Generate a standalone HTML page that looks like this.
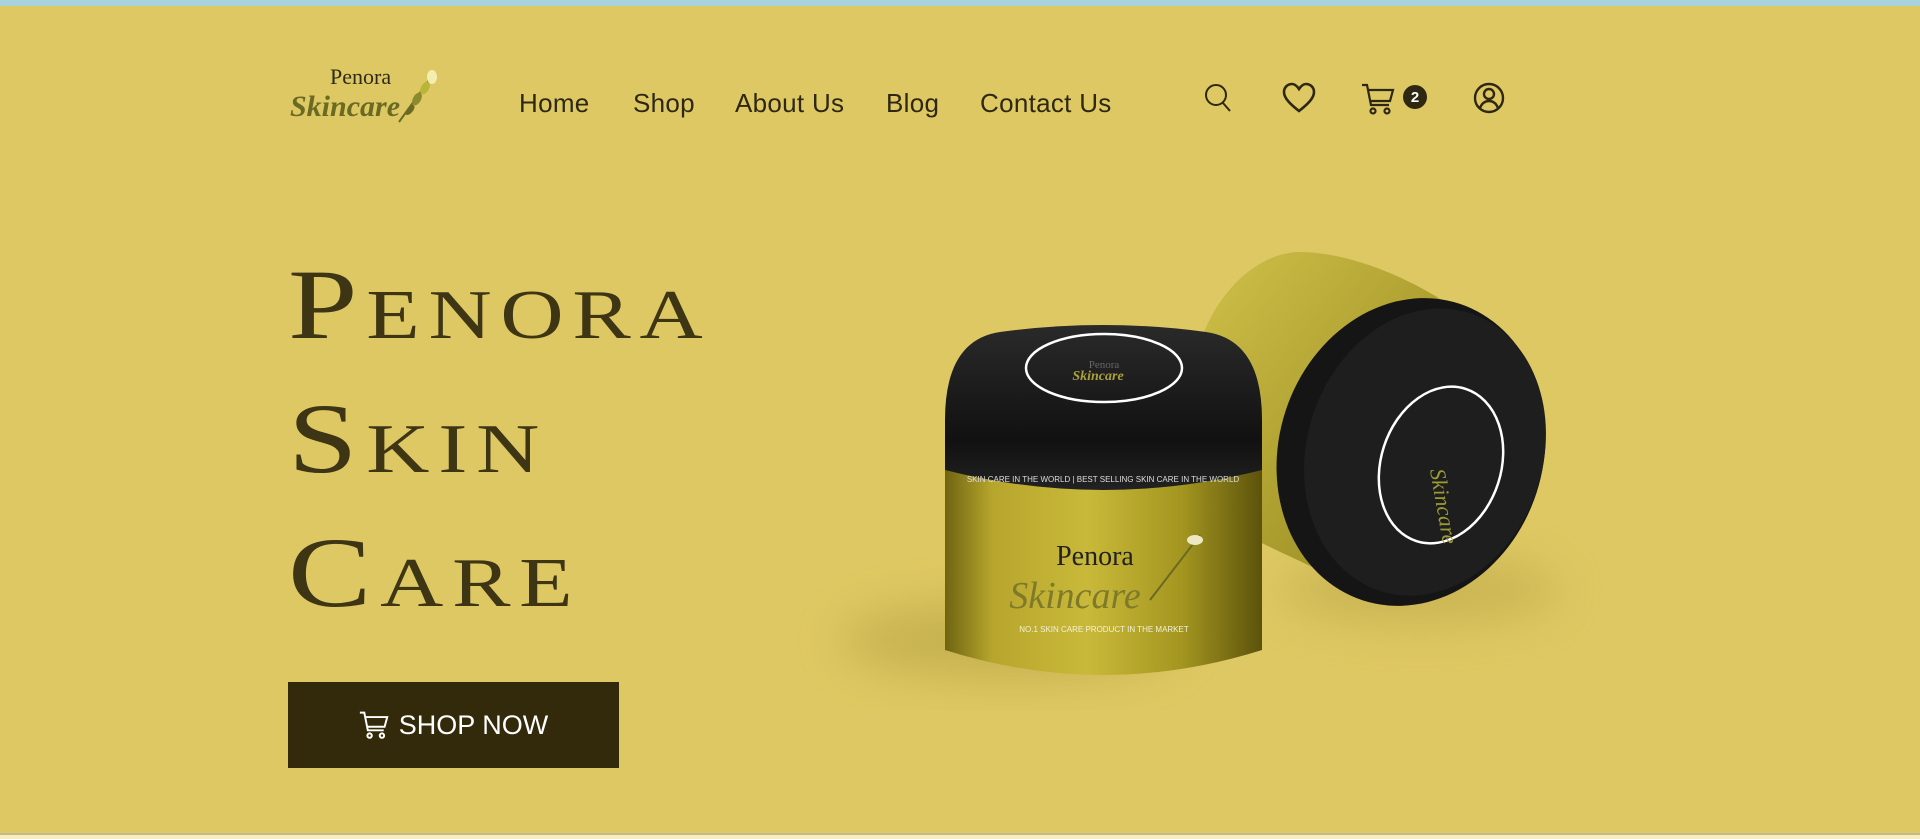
<!DOCTYPE html>
<html><head><meta charset="utf-8"><style>
*{margin:0;padding:0;box-sizing:border-box}
html,body{width:1920px;height:839px;overflow:hidden}
body{background:#f6eebf;font-family:"Liberation Sans",sans-serif;position:relative}
.top{position:absolute;left:0;top:0;width:1920px;height:6px;background:#a9d3dc}
.hero{position:absolute;left:0;top:6px;width:1920px;height:827px;background:#dec863}
.line{position:absolute;left:0;top:833px;width:1920px;height:2px;background:#c2b892}
.nav a{position:absolute;top:88px;font-size:26px;color:#2e2812;text-decoration:none;letter-spacing:0.3px}
h1{position:absolute;left:288px;top:238px;font-family:"Liberation Serif",serif;font-weight:normal;color:#3d3514;font-size:100px;line-height:134px;font-variant:small-caps;letter-spacing:7px;transform:scaleX(1.25);transform-origin:left top}
.btn{position:absolute;left:288px;top:682px;width:331px;height:86px;background:#332a0c;color:#fff;font-size:27px;display:flex;align-items:center;justify-content:center;gap:10px}
.logo1{position:absolute;left:330px;top:64px;font-family:"Liberation Serif",serif;font-size:22px;color:#2e2a1a}
.logo2{position:absolute;left:290px;top:90px;font-family:"Liberation Serif",serif;font-style:italic;font-weight:bold;font-size:30px;color:#6a6a22}
</style></head><body>
<div class="top"></div>
<div class="hero"></div>
<div class="line"></div>
<div class="logo1">Penora</div>
<div class="logo2">Skincare</div>
<svg style="position:absolute;left:395px;top:66px" width="50" height="60" viewBox="0 0 50 60">
<path d="M4 56 L40 6" stroke="#6a6a22" stroke-width="2" fill="none"/>
<ellipse cx="30" cy="22" rx="4" ry="7" fill="#b9b43a" transform="rotate(30 30 22)"/>
<ellipse cx="22" cy="33" rx="4" ry="7" fill="#8d8a2e" transform="rotate(30 22 33)"/>
<ellipse cx="37" cy="11" rx="5" ry="7" fill="#f3eeb0"/>
<ellipse cx="15" cy="44" rx="3" ry="6" fill="#6a6a22" transform="rotate(40 15 44)"/>
</svg>
<div class="nav">
<a style="left:519px">Home</a><a style="left:633px">Shop</a><a style="left:735px">About Us</a><a style="left:886px">Blog</a><a style="left:980px">Contact Us</a>
</div>
<svg style="position:absolute;left:1203px;top:82px" width="30" height="32" viewBox="0 0 30 32" fill="none" stroke="#2e2812" stroke-width="2"><circle cx="13" cy="13" r="10"/><path d="M20 21l7 8"/></svg>
<svg style="position:absolute;left:1282px;top:82px" width="34" height="32" viewBox="0 0 34 32" fill="none" stroke="#2e2812" stroke-width="2.6"><path d="M17 29C8 22 2 16 2 10 2 5 6 2 10 2c3 0 5 2 7 5 2-3 4-5 7-5 4 0 8 3 8 8 0 6-6 12-15 19z"/></svg>
<svg style="position:absolute;left:1361px;top:82px" width="34" height="34" viewBox="0 0 34 34" fill="none" stroke="#2e2812" stroke-width="2.2"><path d="M1 3h5l4 20h18M7 8h25l-3 11H10"/><circle cx="12" cy="29" r="2.5"/><circle cx="26" cy="29" r="2.5"/></svg>
<div style="position:absolute;left:1403px;top:85px;width:24px;height:24px;border-radius:50%;background:#2e2812;color:#fff;font-size:15px;font-weight:bold;display:flex;align-items:center;justify-content:center">2</div>
<svg style="position:absolute;left:1473px;top:82px" width="32" height="32" viewBox="0 0 32 32" fill="none" stroke="#2e2812" stroke-width="2.4"><circle cx="16" cy="16" r="14"/><circle cx="16" cy="12" r="5"/><path d="M7 26c2-5 5-7 9-7s7 2 9 7"/></svg>
<h1>Penora<br>Skin<br>Care</h1>
<svg style="position:absolute;left:740px;top:240px" width="880" height="470" viewBox="740 240 880 470">
<defs>
<linearGradient id="g" x1="0" x2="1"><stop offset="0" stop-color="#6f6412"/><stop offset=".15" stop-color="#b7a62c"/><stop offset=".45" stop-color="#c9b93a"/><stop offset=".75" stop-color="#a3951f"/><stop offset="1" stop-color="#5c520c"/></linearGradient>
<linearGradient id="g2" x1="0" y1="0" x2="1" y2="1"><stop offset="0" stop-color="#d0c04a"/><stop offset="1" stop-color="#8e8218"/></linearGradient>
<linearGradient id="lid" x1="0" y1="0" x2="0" y2="1"><stop offset="0" stop-color="#2a2a2a"/><stop offset=".7" stop-color="#111"/><stop offset="1" stop-color="#222"/></linearGradient>
<filter id="b" x="-100%" y="-200%" width="300%" height="500%"><feGaussianBlur stdDeviation="22"/></filter>
</defs>
<ellipse cx="1010" cy="640" rx="170" ry="40" fill="#b8a445" opacity=".6" filter="url(#b)"/>
<ellipse cx="1420" cy="590" rx="140" ry="35" fill="#b8a445" opacity=".5" filter="url(#b)"/>
<path d="M1198 350 C1215 290 1260 252 1300 252 C1350 252 1420 280 1470 320 L1360 590 C1300 560 1250 540 1200 510 Z" fill="url(#g2)"/>
<ellipse cx="1411" cy="452" rx="132" ry="156" fill="#151515" transform="rotate(18 1411 452)"/>
<ellipse cx="1425" cy="452" rx="118" ry="146" fill="#1e1e1e" transform="rotate(18 1425 452)"/>
<ellipse cx="1441" cy="465" rx="60" ry="80" fill="none" stroke="#fff" stroke-width="2.5" transform="rotate(18 1441 465)"/>
<text x="1430" y="470" font-family="Liberation Serif" font-style="italic" font-size="22" fill="#9c9a35" transform="rotate(80 1430 470)">Skincare</text>
<path d="M945 440 L945 650 Q1103 700 1262 650 L1262 440 Z" fill="url(#g)"/>
<path d="M945 420 Q945 340 1000 332 Q1103 318 1206 332 Q1262 340 1262 420 L1262 470 Q1103 510 945 470 Z" fill="url(#lid)"/>
<ellipse cx="1104" cy="368" rx="78" ry="34" fill="none" stroke="#fff" stroke-width="2.5"/>
<text x="1104" y="368" text-anchor="middle" font-family="Liberation Serif" font-size="11" fill="#666">Penora</text>
<text x="1098" y="380" text-anchor="middle" font-family="Liberation Serif" font-style="italic" font-weight="bold" font-size="14" fill="#aaa03a">Skincare</text>
<text x="1103" y="482" text-anchor="middle" font-family="Liberation Sans" font-size="8" fill="#ddd">SKIN CARE IN THE WORLD | BEST SELLING SKIN CARE IN THE WORLD</text>
<text x="1095" y="565" text-anchor="middle" font-family="Liberation Serif" font-size="28" fill="#222">Penora</text>
<text x="1075" y="608" text-anchor="middle" font-family="Liberation Serif" font-style="italic" font-size="38" fill="#7f7a2a">Skincare</text>
<path d="M1150 600 L1200 535" stroke="#6a6a22" stroke-width="2"/>
<ellipse cx="1195" cy="540" rx="8" ry="5" fill="#eee8c0"/>
<text x="1104" y="632" text-anchor="middle" font-family="Liberation Sans" font-size="8" fill="#f4f0d8">NO.1 SKIN CARE PRODUCT IN THE MARKET</text>
</svg>
<div class="btn"><svg width="30" height="30" viewBox="0 0 34 34" fill="none" stroke="#fff" stroke-width="2.2"><path d="M1 3h5l4 20h18M7 8h25l-3 11H10"/><circle cx="12" cy="29" r="2.5"/><circle cx="26" cy="29" r="2.5"/></svg>SHOP NOW</div>
</body></html>
